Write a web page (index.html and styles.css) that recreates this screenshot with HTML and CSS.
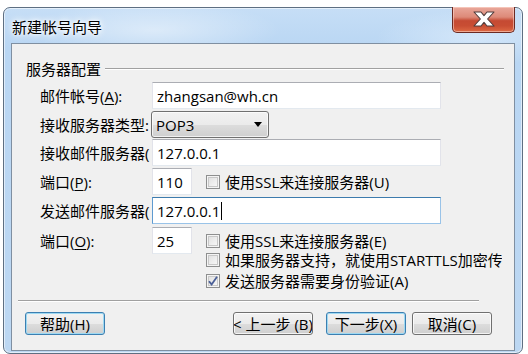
FILE: index.html
```html
<!DOCTYPE html>
<html lang="zh-CN">
<head>
<meta charset="utf-8">
<title>新建帐号向导</title>
<link rel="stylesheet" href="styles.css">
</head>
<body>
<div class="window">
  <div class="titlebar">
    <span class="title">新建帐号向导</span>
    <div class="close">
      <svg width="22" height="16" viewBox="0 0 22 16">
        <path d="M1 1 H8 L11 4.6 L14 1 H21 L14.6 8 L21 15 H14 L11 11.4 L8 15 H1 L7.4 8 Z" fill="#ffffff" stroke="#4f3b3a" stroke-width="1.1" stroke-linejoin="round"/>
      </svg>
    </div>
  </div>
  <div class="client">
    <div class="group-head"><span class="group-title">服务器配置</span><span class="etch grow"></span></div>
    <div class="form">
      <div class="row">
        <span class="lbl">邮件帐号(<u>A</u>):</span>
        <div class="input wide">zhangsan@wh.cn</div>
      </div>
      <div class="row r2">
        <span class="lbl">接收服务器类型:</span>
        <div class="select"><span>POP3</span><span class="arrow"></span></div>
      </div>
      <div class="row r3">
        <span class="lbl">接收邮件服务器(</span>
        <div class="input wide">127.0.0.1</div>
      </div>
      <div class="row">
        <span class="lbl">端口(<u>P</u>):</span>
        <div class="input port">110</div>
        <span class="check"></span><span class="ctext">使用SSL来连接服务器(U)</span>
      </div>
      <div class="row">
        <span class="lbl">发送邮件服务器(</span>
        <div class="input wide focus">127.0.0.1<span class="caret"></span></div>
      </div>
      <div class="row r6">
        <span class="lbl">端口(<u>O</u>):</span>
        <div class="input port">25</div>
        <span class="check"></span><span class="ctext">使用SSL来连接服务器(E)</span>
      </div>
      <div class="crow r7">
        <span class="check"></span><span class="ctext">如果服务器支持，就使用STARTTLS加密传输(T)</span>
      </div>
      <div class="crow r8">
        <span class="check checked"><svg width="12" height="12" viewBox="0 0 12 12"><path d="M2 6.2 L4.6 9.4 L10 1.8" fill="none" stroke="#4a5f97" stroke-width="1.8"/></svg></span><span class="ctext">发送服务器需要身份验证(A)</span>
      </div>
    </div>
    <div class="footer">
      <div class="sep etch"></div>
      <div class="buttons">
        <div class="btn blue">帮助(H)</div>
        <div class="btn back">&lt; 上一步 (B)</div>
        <div class="btn blue next">下一步(X)</div>
        <div class="btn cancel">取消(C)</div>
      </div>
    </div>
  </div>
</div>
</body>
</html>
```

FILE: styles.css
```css
* { box-sizing: border-box; }
html, body { margin: 0; padding: 0; background: #ffffff; overflow: hidden; }
body {
  font-family: "Open Sans", "Noto Sans CJK SC", sans-serif;
  font-size: 15px;
  color: #000;
}
.window {
  margin: 7px 0 0 3px;
  width: 520px;
  height: 347px;
  border: 1px solid #5e6f82;
  border-radius: 7px;
  background:
    radial-gradient(ellipse 180px 40px at 150px 22px, rgba(255,255,255,0.45), rgba(255,255,255,0) 70%),
    radial-gradient(ellipse 140px 40px at 470px 30px, rgba(235,245,255,0.5), rgba(255,255,255,0) 70%),
    linear-gradient(to bottom, #c6def6 0px, #b9d6f3 40px, #bcd7f2 100%);
  box-shadow: inset 0 0 0 1px rgba(255,255,255,0.55);
  display: flex;
  flex-direction: column;
  padding: 0 7px;
}
.titlebar {
  height: 35px;
  display: flex;
  align-items: flex-start;
  flex-shrink: 0;
}
.title {
  margin: 9px 0 0 1px;
  line-height: 20px;
  font-family: "Noto Sans CJK SC", sans-serif;
  font-size: 15px;
  color: #000;
  text-shadow: 0 0 6px #ffffff, 0 0 10px #ffffff, 0 0 3px #ffffff;
  flex: 1;
}
.close {
  width: 63px;
  height: 26px;
  margin-top: -1px;
  border: 1px solid #6c2a22;
  border-top: none;
  border-radius: 0 0 5px 5px;
  background: linear-gradient(to bottom, #e9a89b 0%, #dd8a79 40%, #c54a33 55%, #c84d33 75%, #de6a44 100%);
  box-shadow: inset 0 0 0 1px rgba(255,220,210,0.55);
  display: flex;
  align-items: center;
  justify-content: center;
}
.close svg { display: block; margin-top: -1px; }
.client {
  height: 308px;
  border: 1px solid #7f8fa1;
  background: #f0f0f0;
  display: flex;
  flex-direction: column;
  padding: 15px 0 0 0;
}
.group-head {
  display: flex;
  align-items: center;
  height: 20px;
  padding: 0 10px 0 14px;
}
.group-title { line-height: 20px; font-family: "Noto Sans CJK SC", sans-serif; }
.etch {
  height: 2px;
  border-top: 1px solid #a0a0a0;
  border-bottom: 1px solid #ffffff;
}
.grow { flex: 1; margin-left: 4px; }
.form {
  display: flex;
  flex-direction: column;
  padding-left: 28px;
  margin-top: 3px;
}
.row {
  display: flex;
  align-items: center;
  height: 27px;
  margin-top: 2px;
}
.row:first-child { margin-top: 0; }
.row.r2 { margin-top: 2px; }
.row.r3 { margin-top: 1px; }
.row.r6 { margin-top: 3px; }
.lbl {
  width: 112px;
  flex-shrink: 0;
  white-space: nowrap;
  line-height: 20px;
}
.lbl u { text-decoration-thickness: 1px; text-underline-offset: 2px; }
.input {
  height: 27px;
  background: #ffffff;
  border: 1px solid #e2e3ea;
  border-top-color: #abadb3;
  border-bottom-color: #e3e9ef;
  padding: 0 4px;
  display: flex;
  align-items: center;
  white-space: nowrap;
  line-height: 20px;
}
.input.wide { width: 289px; }
.input.port { width: 40px; }
.input.focus {
  border-color: #99c3e8;
  border-top-color: #3d7bad;
  border-left-color: #5e9ad0;
}
.caret {
  display: inline-block;
  width: 1px;
  height: 18px;
  background: #000;
  margin-left: 1px;
}
.select {
  width: 118px;
  height: 27px;
  border: 1px solid #707070;
  border-radius: 3px;
  background: linear-gradient(to bottom, #f2f2f2 0%, #ebebeb 50%, #dddddd 51%, #cfcfcf 100%);
  box-shadow: inset 0 0 0 1px rgba(255,255,255,0.7);
  display: flex;
  align-items: center;
  justify-content: space-between;
  padding: 0 6px 0 4px;
  margin-left: -1px;
}
.arrow {
  width: 0;
  height: 0;
  border-left: 4.5px solid transparent;
  border-right: 4.5px solid transparent;
  border-top: 5px solid #000;
}
.check {
  width: 14px;
  height: 14px;
  flex-shrink: 0;
  border: 1px solid #8e8f8f;
  background: linear-gradient(135deg, #dcdcdc 0%, #eeeeee 55%, #fbfbfb 100%);
  box-shadow: inset 0 0 0 1px #f4f4f4, inset 0 0 0 2px #c8c8c8;
  display: flex;
  align-items: center;
  justify-content: center;
}
.row .check { margin-left: 14px; }
.check.checked svg { display: block; }
.ctext {
  margin-left: 5px;
  line-height: 20px;
  white-space: nowrap;
}
.crow {
  display: flex;
  align-items: center;
  padding-left: 166px;
  width: 462px;
  overflow: hidden;
  white-space: nowrap;
}
.crow.r7 { height: 20px; margin-top: -4px; }
.crow.r8 { height: 21px; margin-top: 0; }
.footer {
  margin-top: auto;
  padding-bottom: 15px;
}
.sep { margin: 0 35px 0 6px; }
.buttons {
  display: flex;
  margin-top: 10px;
  padding-left: 13px;
}
.btn {
  width: 80px;
  height: 23px;
  border: 1px solid #707070;
  border-radius: 3px;
  background: linear-gradient(to bottom, #f2f2f2 0%, #ebebeb 50%, #dddddd 51%, #cfcfcf 100%);
  box-shadow: inset 0 0 0 1px rgba(255,255,255,0.75);
  display: flex;
  align-items: center;
  justify-content: center;
  white-space: nowrap;
  overflow: hidden;
  line-height: 20px;
}
.btn.blue {
  border-color: #3c7fb1;
  box-shadow: inset 0 0 0 1px #9ed9f2;
}
.btn.back { margin-left: 128px; }
.btn.next { margin-left: 13px; }
.btn.cancel { margin-left: 6px; }
```
